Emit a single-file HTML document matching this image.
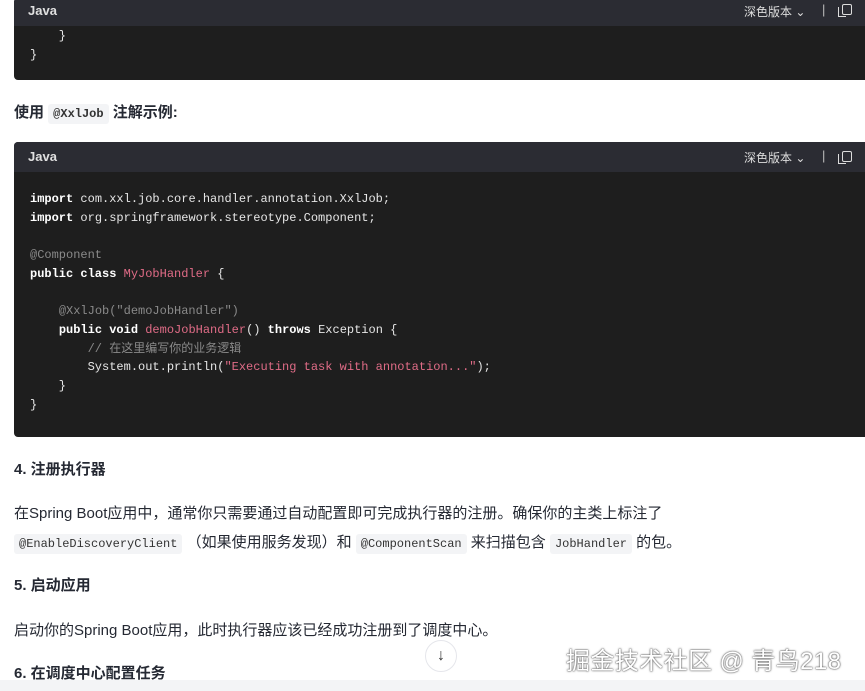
<!DOCTYPE html>
<html><head><meta charset="utf-8"><style>
body{margin:0;width:865px;height:691px;overflow:hidden;background:#fff;font-family:"Liberation Sans","Noto Sans CJK SC",sans-serif;color:#252933;position:relative}
.blk{position:absolute;left:14px;width:860px;background:#1e1e1e;border-radius:4px;overflow:hidden}
.hd{height:28px;background:#2b2c33;position:relative;color:#e0e0e0;font-size:13px;font-weight:bold}
.hd .l{position:absolute;left:14px;top:5px}
.hd .r{position:absolute;left:730px;top:5px;font-weight:normal;font-size:12px;color:#ddd}
.hd .p{position:absolute;left:808px;top:4px;font-weight:normal;font-size:13px;color:#bbb}
.hd .i{position:absolute;left:828px;top:6px;width:8px;height:9px;border:1.3px solid #ddd;border-radius:2px}
.hd .i:before{content:"";position:absolute;left:-5px;top:2px;width:7px;height:9px;border-left:1.3px solid #ddd;border-bottom:1.3px solid #ddd}
pre{margin:0;font-family:"Liberation Mono","Noto Sans CJK SC",monospace;font-size:12px;line-height:18.7px;color:#e6e6e6;padding:0 16px}
b{color:#fff}.c{color:#8a8a8a}.k{color:#e06c87}.s{color:#e06c87}
.t{position:absolute;left:14px;font-size:15px}
.h{font-weight:bold}
code{font-family:"Liberation Mono",monospace;font-size:12px;background:#f3f4f6;padding:3px 5px;border-radius:3px;color:#333}
</style></head><body>
<div class="blk" style="top:-2px;height:82px">
<div class="hd"><span class="l">Java</span><span class="r">深色版本 ⌄</span><span class="p">|</span><span class="i"></span></div>
<pre style="padding-top:1px">    }
}</pre></div>
<div class="t h" style="top:101px">使用 <code style="font-weight:bold">@XxlJob</code> 注解示例:</div>
<div class="blk" style="top:142px;height:295px">
<div class="hd" style="height:30px"><span class="l" style="top:7px">Java</span><span class="r" style="top:7px">深色版本 ⌄</span><span class="p" style="top:6px">|</span><span class="i" style="top:9px"></span></div>
<pre style="padding-top:18px"><b>import</b> com.xxl.job.core.handler.annotation.XxlJob;
<b>import</b> org.springframework.stereotype.Component;

<span class="c">@Component</span>
<b>public class</b> <span class="k">MyJobHandler</span> {

    <span class="c">@XxlJob("demoJobHandler")</span>
    <b>public void</b> <span class="k">demoJobHandler</span>() <b>throws</b> Exception {
        <span class="c">// 在这里编写你的业务逻辑</span>
        System.out.println(<span class="s">"Executing task with annotation..."</span>);
    }
}</pre></div>
<div class="t h" style="top:458px">4. 注册执行器</div>
<div class="t" style="top:502px">在Spring Boot应用中，通常你只需要通过自动配置即可完成执行器的注册。确保你的主类上标注了</div>
<div class="t" style="top:531px"><code>@EnableDiscoveryClient</code> （如果使用服务发现）和 <code>@ComponentScan</code> 来扫描包含 <code>JobHandler</code> 的包。</div>
<div class="t h" style="top:574px">5. 启动应用</div>
<div class="t" style="top:619px">启动你的Spring Boot应用，此时执行器应该已经成功注册到了调度中心。</div>
<div class="t h" style="top:662px">6. 在调度中心配置任务</div>
<div style="position:absolute;left:425px;top:640px;width:30px;height:30px;border-radius:50%;border:1px solid #e5e6eb;background:#fff;text-align:center;line-height:30px;font-size:16px;color:#333">↓</div>
<div style="position:absolute;left:0;top:680px;width:865px;height:11px;background:#f3f4f6"></div>
<div style="position:absolute;left:566px;top:641px;font-size:24px;letter-spacing:0.4px;color:#fff;text-shadow:0 0 2px #555,0 0 1px #333">掘金技术社区 @ 青鸟218</div>
</body></html>
